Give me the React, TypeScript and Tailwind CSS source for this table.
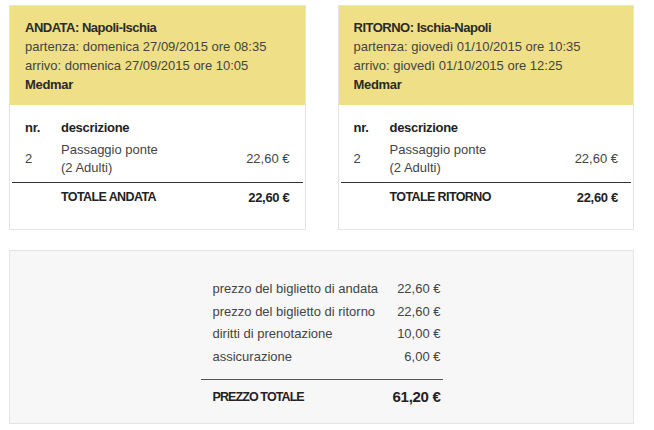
import React from 'react';

type Trip = {
  title: string;
  route: string;
  partenza: string;
  arrivo: string;
  company: string;
  totalLabel: string;
};

const TRIPS: Trip[] = [
  {
    title: 'ANDATA',
    route: 'Napoli-Ischia',
    partenza: 'domenica 27/09/2015 ore 08:35',
    arrivo: 'domenica 27/09/2015 ore 10:05',
    company: 'Medmar',
    totalLabel: 'TOTALE ANDATA',
  },
  {
    title: 'RITORNO',
    route: 'Ischia-Napoli',
    partenza: 'giovedì 01/10/2015 ore 10:35',
    arrivo: 'giovedì 01/10/2015 ore 12:25',
    company: 'Medmar',
    totalLabel: 'TOTALE RITORNO',
  },
];

const SUMMARY = [
  { label: 'prezzo del biglietto di andata', value: '22,60 €' },
  { label: 'prezzo del biglietto di ritorno', value: '22,60 €' },
  { label: 'diritti di prenotazione', value: '10,00 €' },
  { label: 'assicurazione', value: '6,00 €' },
];

const TripCard: React.FC<{ trip: Trip }> = ({ trip }) => (
  <div className="border border-[#e4e4e4] bg-white">
    <div className="bg-[#efdf86] px-[15px] pt-[12px] pb-[11px] text-[13px] leading-[19px] text-[#444]">
      <div className="font-bold tracking-[-0.5px] text-[#2a2a2a]">
        {trip.title}: {trip.route}
      </div>
      <div>partenza: {trip.partenza}</div>
      <div>arrivo: {trip.arrivo}</div>
      <div className="font-bold tracking-[-0.3px] text-[#2a2a2a]">{trip.company}</div>
    </div>

    <div className="px-[2px] pt-[13px] pb-[22px] text-[13px] text-[#444]">
      <div className="flex px-[13px] leading-[19px] font-bold tracking-[-0.3px] text-[#222]">
        <span className="w-[36px]">nr.</span>
        <span>descrizione</span>
      </div>
      <div className="mt-[4px] flex items-center border-b border-[#333] px-[13px] pb-[5px]">
        <span className="w-[36px]">2</span>
        <div className="flex-1 leading-[18px]">
          <div>Passaggio ponte</div>
          <div>(2 Adulti)</div>
        </div>
        <span>22,60 €</span>
      </div>
      <div className="flex items-center px-[13px] pt-[5px] leading-[19px] font-bold text-[#222]">
        <span className="w-[36px]" />
        <span className="flex-1 text-[12.5px] tracking-[-0.6px]">{trip.totalLabel}</span>
        <span className="tracking-[-0.3px]">22,60 €</span>
      </div>
    </div>
  </div>
);

export default function App() {
  return (
    <div
      className="min-h-[430px] bg-white pt-[5px] pl-[9px]"
      style={{ fontFamily: '"Liberation Sans", Arial, sans-serif' }}
    >
      <div className="w-[625px]">
        <div className="grid grid-cols-2 gap-[32px]">
          {TRIPS.map((t) => (
            <TripCard key={t.title} trip={t} />
          ))}
        </div>

        <div className="mt-[20px] flex h-[174px] justify-center border border-[#e4e4e4] bg-[#f7f7f7] pt-[27px]">
          <div className="w-[242px] text-[13px] text-[#444]">
            {SUMMARY.map((row) => (
              <div key={row.label} className="flex justify-between pl-[12px] pr-[2px] leading-[22.7px]">
                <span>{row.label}</span>
                <span>{row.value}</span>
              </div>
            ))}
            <div className="mt-[10px] flex items-center justify-between border-t border-[#555] pl-[12px] pr-[2px] pt-[6px] text-[#222]">
              <span className="text-[12.5px] font-bold tracking-[-0.9px]">PREZZO TOTALE</span>
              <span className="text-[15px] font-bold tracking-[-0.3px]">61,20 €</span>
            </div>
          </div>
        </div>
      </div>
    </div>
  );
}
